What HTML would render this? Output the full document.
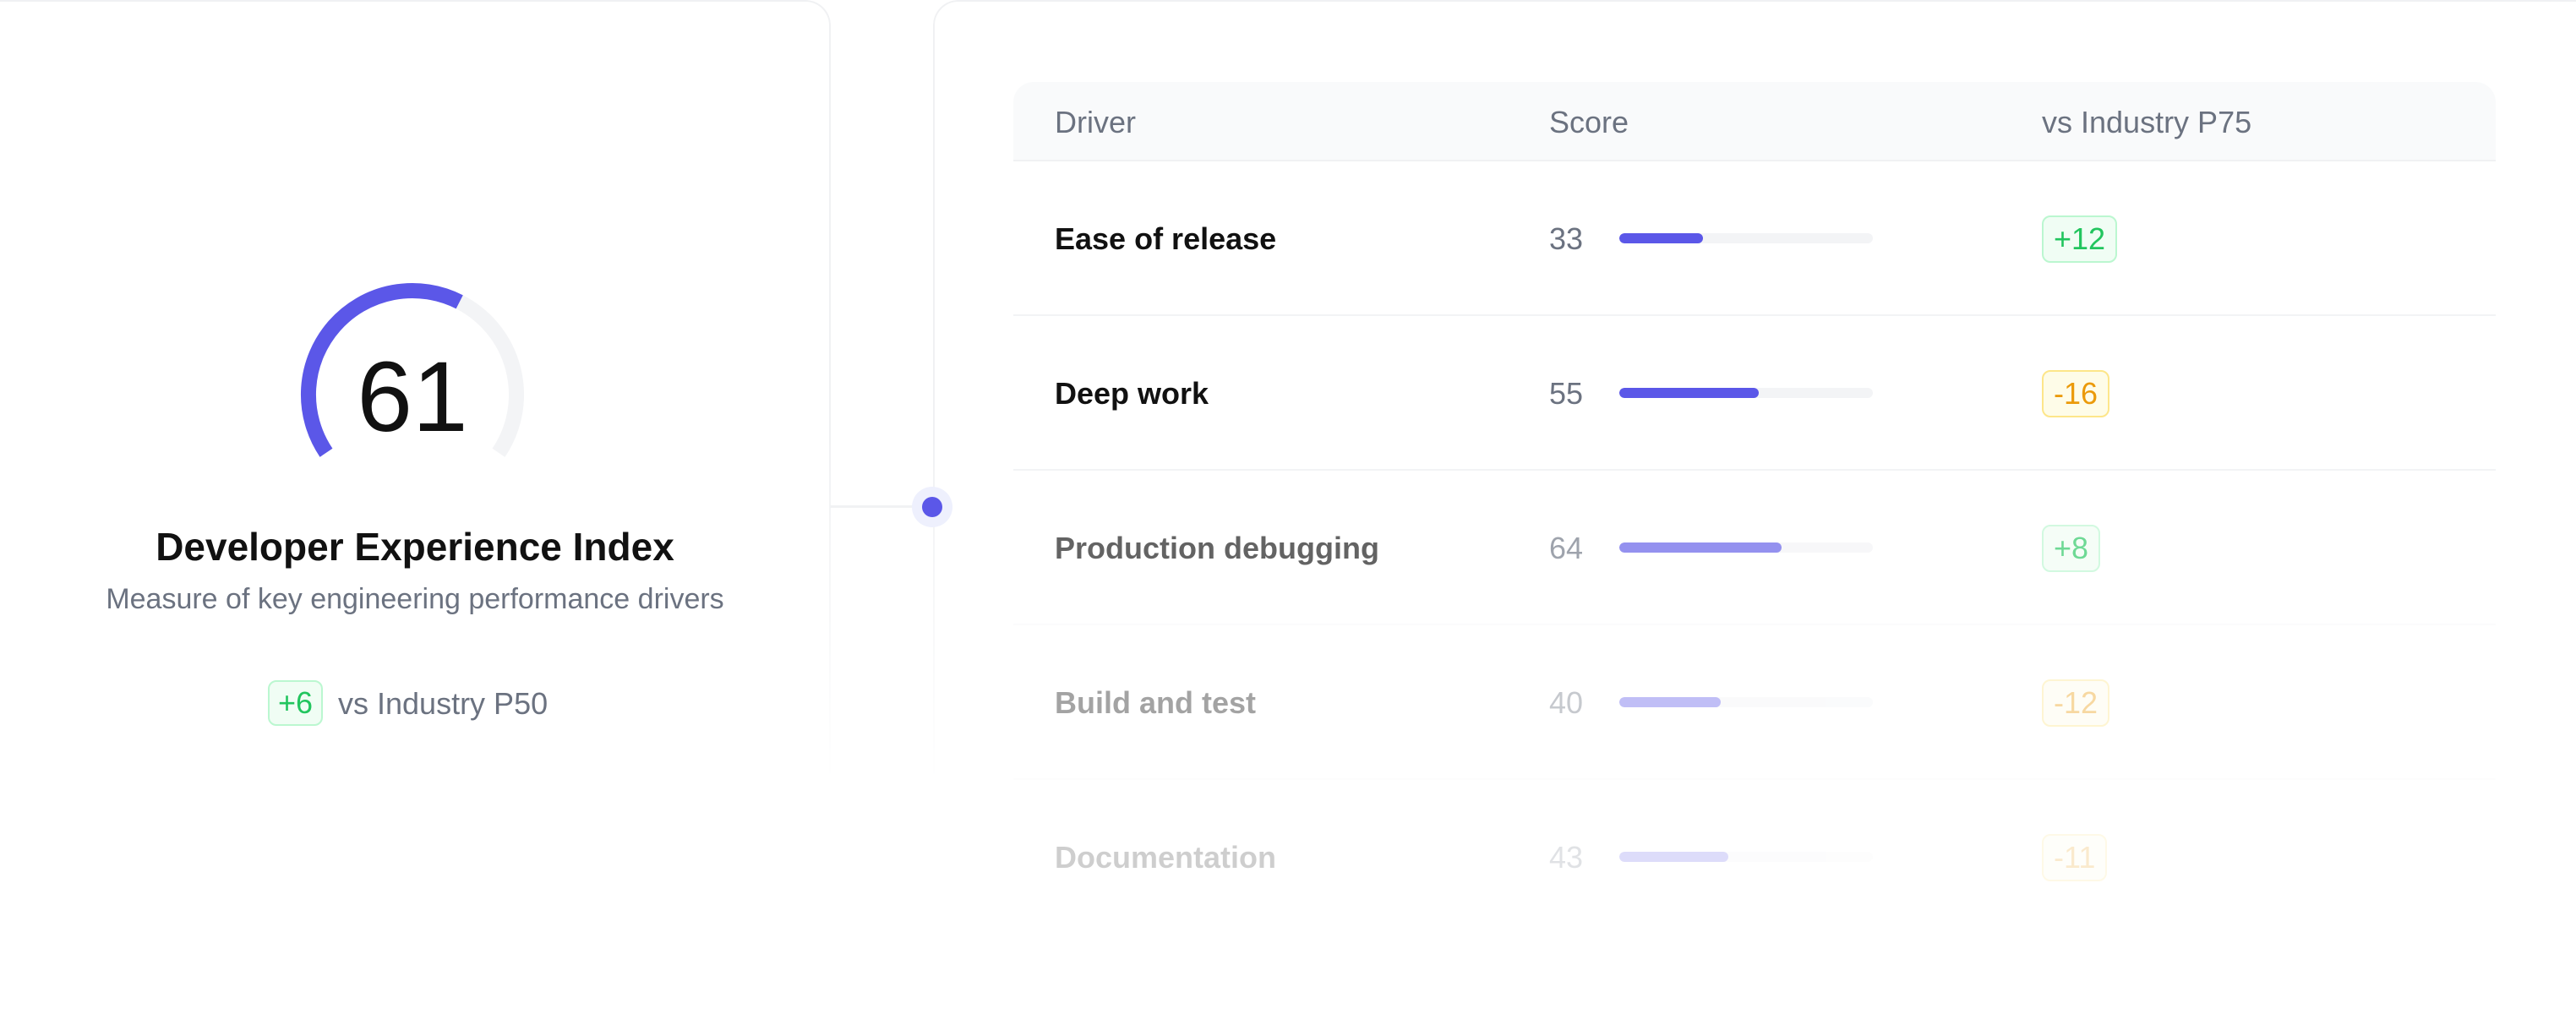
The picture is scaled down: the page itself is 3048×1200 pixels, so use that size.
<!DOCTYPE html>
<html><head><meta charset="utf-8"><style>
*{margin:0;padding:0;box-sizing:border-box}
html,body{width:3048px;height:1200px;background:#fff;overflow:hidden;font-family:"Liberation Sans",sans-serif;position:relative}
.abs{position:absolute}
.card{position:absolute;border:2px solid #f0f1f3;-webkit-mask-image:linear-gradient(#000 55%,transparent 100%);mask-image:linear-gradient(#000 55%,transparent 100%)}
.badge{position:absolute;height:56px;border:2px solid;border-radius:10px;font-size:36px;line-height:52px;padding:0 12px}
.g{background:#f0fdf4;border-color:#bbf7d0;color:#22c55e}
.o{background:#fefce8;border-color:#fde68a;color:#eb9a0a}
.row{position:absolute;left:1199px;width:1754px;height:183px}
.row .name{position:absolute;left:49px;top:0;line-height:183px;font-size:36px;font-weight:bold;color:#111}
.row .num{position:absolute;left:634px;top:0;line-height:183px;font-size:36px;color:#6b7280}
.row .bar{position:absolute;left:717px;top:85px;width:300px;height:12px;border-radius:6px;background:#f3f4f6;overflow:hidden}
.row .bar i{position:absolute;left:0;top:0;height:12px;border-radius:6px;background:#5b57e8}
.row .sep{position:absolute;left:0;right:0;bottom:0;height:2px;background:#f2f3f5}
</style></head><body>
<div class="card" style="left:-40px;top:0;width:1023px;height:930px;border-radius:0 30px 0 0;border-left:none"></div>
<div class="card" style="left:1104px;top:0;width:2100px;height:930px;border-radius:30px 0 0 0"></div>
<div class="abs" style="left:982px;top:598px;width:110px;height:3px;background:#f1f2f4"></div>
<div class="abs" style="left:1079px;top:576px;width:48px;height:48px;border-radius:50%;background:#eef0fd"></div>
<div class="abs" style="left:1091px;top:588px;width:24px;height:24px;border-radius:50%;background:#5b57e8"></div>

<svg class="abs" style="left:0;top:0" width="1000" height="700">
<path d="M386 535.8 A123 123 0 0 1 543.8 357.4" fill="none" stroke="#5b57e8" stroke-width="18"/>
<path d="M543.8 357.4 A123 123 0 0 1 590 535.8" fill="none" stroke="#f3f4f6" stroke-width="18"/>
<text x="488" y="510" text-anchor="middle" font-family="Liberation Sans" font-size="118" fill="#111">61</text>
</svg>
<div class="abs" style="left:0;width:982px;top:620px;text-align:center;font-size:46px;font-weight:bold;color:#111">Developer Experience Index</div>
<div class="abs" style="left:0;width:982px;top:690px;text-align:center;font-size:34px;color:#6b7280">Measure of key engineering performance drivers</div>
<div class="badge g" style="left:317px;top:805px;height:54px;line-height:50px;padding:0 10px">+6</div>
<div class="abs" style="left:400px;top:812px;font-size:36px;color:#6b7280">vs Industry P50</div>

<div class="abs" style="left:1199px;top:97px;width:1754px;height:94px;background:#f9fafb;border-radius:24px 24px 0 0;border-bottom:2px solid #f0f1f3"></div>
<div class="abs" style="left:1248px;top:124px;font-size:36px;color:#6b7280">Driver</div>
<div class="abs" style="left:1833px;top:124px;font-size:36px;color:#6b7280">Score</div>
<div class="abs" style="left:2416px;top:124px;font-size:36px;color:#6b7280">vs Industry P75</div>

<div class="row" style="top:191px"><div class="name">Ease of release</div><div class="num">33</div><div class="bar"><i style="width:99px"></i></div><div class="badge g" style="left:1217px;top:64px">+12</div><div class="sep"></div></div>
<div class="row" style="top:374px"><div class="name">Deep work</div><div class="num">55</div><div class="bar"><i style="width:165px"></i></div><div class="badge o" style="left:1217px;top:64px">-16</div><div class="sep"></div></div>
<div class="row" style="top:557px;opacity:.65"><div class="name">Production debugging</div><div class="num">64</div><div class="bar"><i style="width:192px"></i></div><div class="badge g" style="left:1217px;top:64px">+8</div><div class="sep" style="opacity:.5"></div></div>
<div class="row" style="top:740px;opacity:.38"><div class="name">Build and test</div><div class="num">40</div><div class="bar"><i style="width:120px"></i></div><div class="badge o" style="left:1217px;top:64px">-12</div><div class="sep" style="opacity:.4"></div></div>
<div class="row" style="top:923px;opacity:.2"><div class="name">Documentation</div><div class="num">43</div><div class="bar"><i style="width:129px"></i></div><div class="badge o" style="left:1217px;top:64px">-11</div></div>
</body></html>
